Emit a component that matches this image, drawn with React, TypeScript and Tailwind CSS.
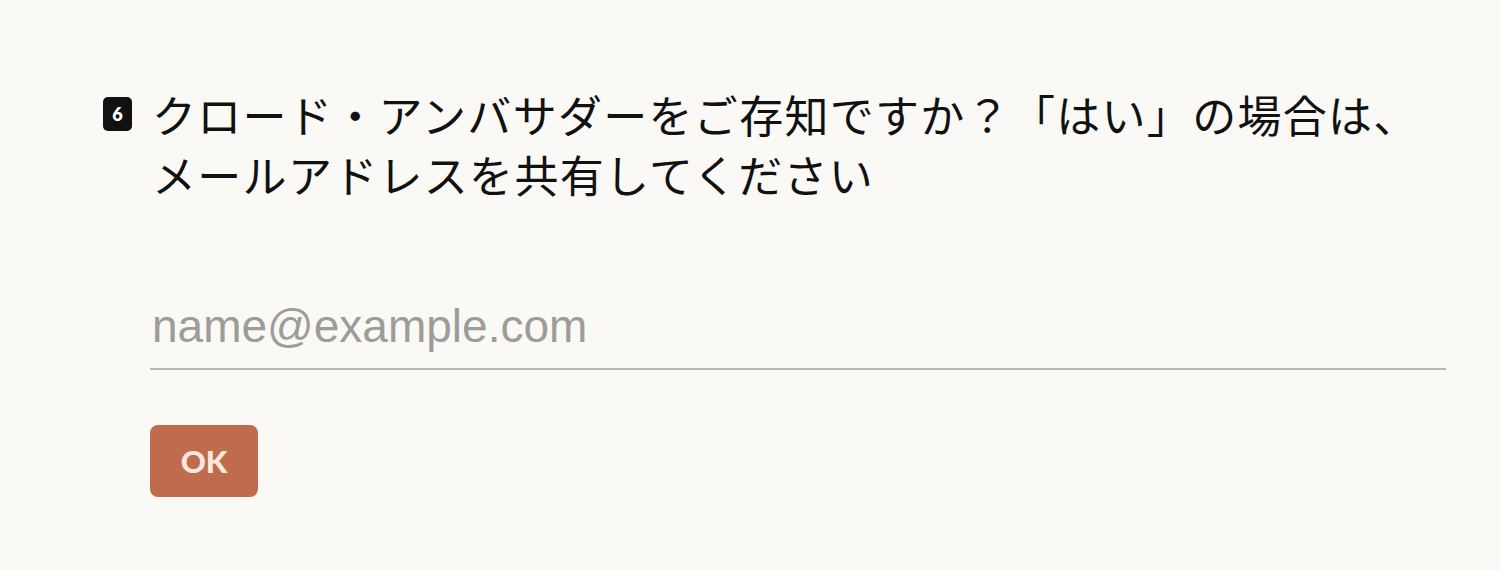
import React from "react";

export default function App() {
  return (
    <div className="w-[1500px] h-[570px] bg-[#faf9f6] overflow-hidden">
      <div className="pl-[103px] pr-[54px] pt-[84px]">
        <div className="flex items-start">
          <div className="w-[30px] shrink-0 mt-[13px] mr-[19px]">
            <div className="w-[29px] h-[34px] rounded-[5px] bg-[#111111] flex items-center justify-center text-white text-[18px] font-extrabold leading-none [font-family:'Lato',sans-serif]">
              6
            </div>
          </div>
          <div className="text-[#111111] text-[44px] leading-[60px] tracking-[1.3px] [font-family:'Noto_Sans_CJK_JP',sans-serif] font-normal">
            クロード・アンバサダーをご存知ですか？「はい」の場合は、
            <br />
            メールアドレスを共有してください
          </div>
        </div>
        <div className="pl-[47px] mt-[94px]">
          <input
            type="text"
            placeholder="name@example.com"
            className="w-full bg-transparent border-b-2 border-[#b9b7b1] outline-none pb-[14px] pl-[2px] text-[46px] leading-[56px] text-[#111] placeholder:text-[#9e9c98] [font-family:'Liberation_Sans',Arial,sans-serif]"
          />
          <button className="mt-[55px] w-[108px] h-[72px] rounded-[8px] bg-[#bf6b4d] text-[#fbe9df] text-[31px] font-black [font-family:'Lato',sans-serif] flex items-center justify-center">
            OK
          </button>
        </div>
      </div>
    </div>
  );
}
